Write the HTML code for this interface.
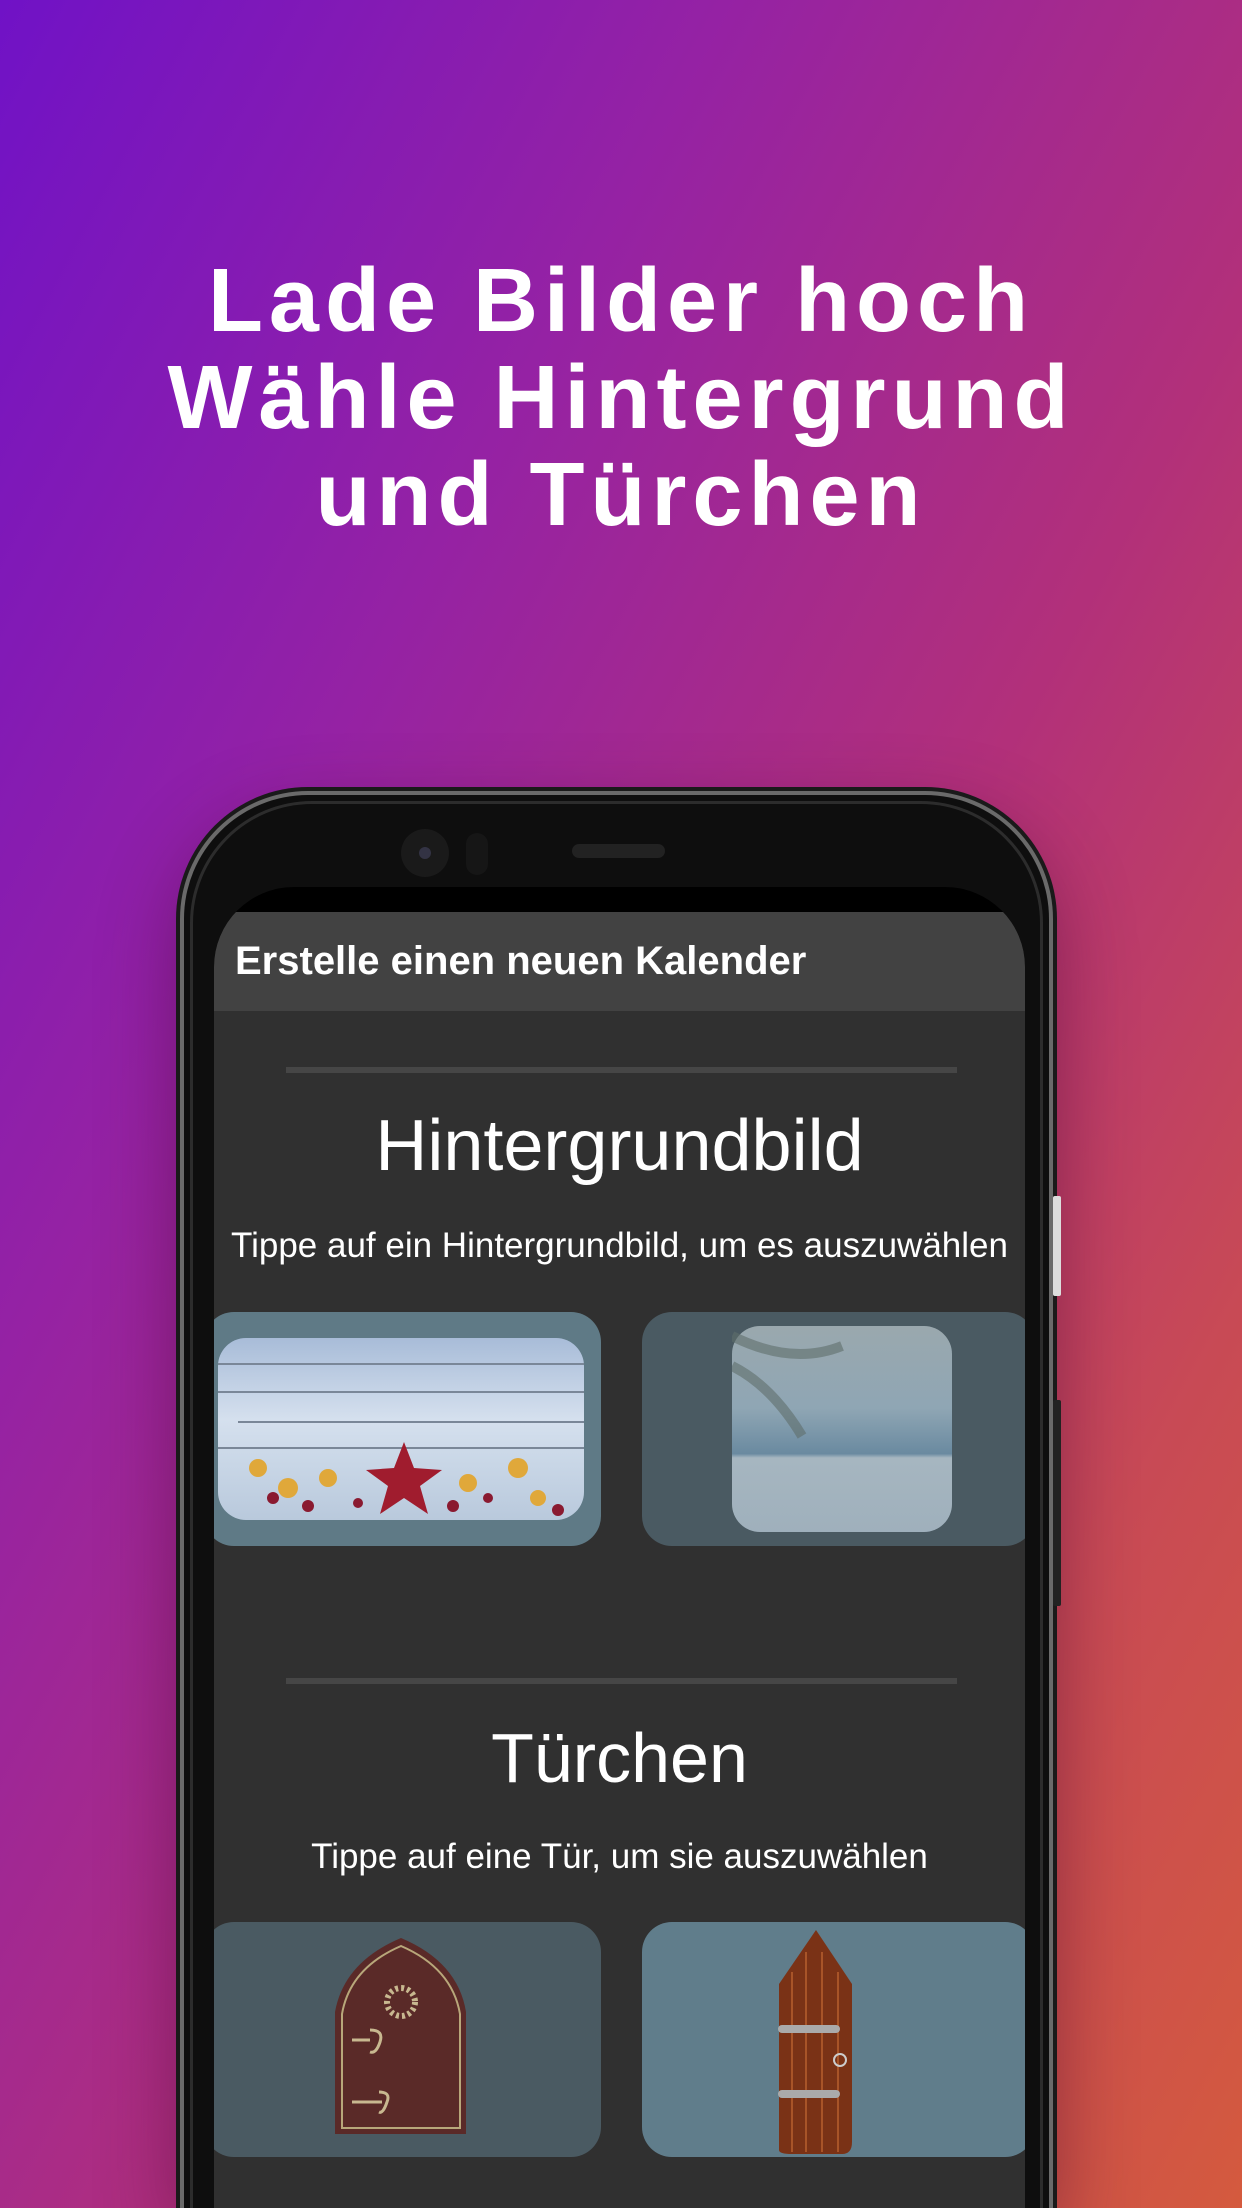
<!DOCTYPE html>
<html><head><meta charset="utf-8"><style>
*{margin:0;padding:0;box-sizing:border-box}
html{width:1242px;height:2208px;overflow:hidden;background:#b2307a}
body{width:1242px;height:2208px;overflow:hidden;position:relative;font-family:"Liberation Sans",sans-serif;
background:linear-gradient(118deg,#7012c6 0%,#9522a4 30%,#b2307a 58%,#c84a55 80%,#d45a3e 100%);}
.h{position:absolute;left:0;width:1242px;text-align:center;color:#fff;font-weight:bold;font-size:90px;line-height:97px;top:253px;letter-spacing:6px}
.phone{position:absolute;left:180px;top:791px;width:873px;height:1417px;border-radius:128px 128px 0 0;background:#0e0e0e;
border:4px solid #6a6a6a;border-bottom:none;box-shadow:0 0 0 4px #1a1a1a,0 30px 80px rgba(60,0,40,.45)}
.phone:before{content:"";position:absolute;left:6px;right:6px;top:6px;bottom:0;border-radius:122px 122px 0 0;border:3px solid #2c2c2c;border-bottom:none}
.btn{position:absolute;width:8px;border-radius:2px}
.screen{position:absolute;left:214px;top:887px;width:811px;height:1321px;border-radius:80px 80px 0 0;background:#000;overflow:hidden}
.bar{position:absolute;left:0;top:25px;width:811px;height:99px;background:#424242;color:#fff;font-size:40px;font-weight:bold;padding-left:21px;line-height:99px;box-shadow:0 4px 8px rgba(0,0,0,.4)}
.body{position:absolute;left:0;top:124px;width:811px;height:1197px;background:#303030}
.div{position:absolute;left:72px;width:671px;height:6px;background:#464646}
.t{position:absolute;left:0;width:811px;text-align:center;color:#fff;white-space:nowrap}
.card{position:absolute;border-radius:30px;overflow:hidden}
</style></head><body>
<div class="h">Lade Bilder hoch<br>Wähle Hintergrund<br>und Türchen</div>
<div class="phone"></div>
<div class="btn" style="left:1053px;top:1196px;height:100px;background:#ddd"></div>
<div class="btn" style="left:1053px;top:1400px;height:206px;background:#222"></div>
<div style="position:absolute;left:401px;top:829px;width:48px;height:48px;border-radius:50%;background:#1a1a1a"></div>
<div style="position:absolute;left:419px;top:847px;width:12px;height:12px;border-radius:50%;background:#334"></div>
<div style="position:absolute;left:466px;top:833px;width:22px;height:42px;border-radius:11px;background:#161616"></div>
<div style="position:absolute;left:572px;top:844px;width:93px;height:14px;border-radius:7px;background:#222"></div>
<div class="screen">
 <div class="bar">Erstelle einen neuen Kalender</div>
 <div class="body">
  <div class="div" style="top:56px"></div>
  <div class="t" style="top:94px;font-size:72px">Hintergrundbild</div>
  <div class="t" style="top:215px;font-size:35px">Tippe auf ein Hintergrundbild, um es auszuwählen</div>
  <div class="card" style="left:-10px;top:301px;width:397px;height:234px;background:#5f7a86">
   <div style="position:absolute;left:14px;top:26px;width:366px;height:182px;border-radius:28px;background:linear-gradient(180deg,#a8bcd8 0%,#d5e0ee 45%,#c8d6e6 70%,#b9c9dc 100%)">
    <svg width="366" height="182" style="position:absolute;left:0;top:0">
     <g stroke="#7a8798" stroke-width="2"><line x1="0" y1="26" x2="366" y2="26"/><line x1="0" y1="54" x2="366" y2="54"/><line x1="20" y1="84" x2="366" y2="84"/><line x1="0" y1="110" x2="366" y2="110"/></g>
     <polygon points="186,104 196,130 224,132 202,148 210,176 186,160 162,176 170,148 148,132 176,130" fill="#a01c2e"/>
     <g fill="#e0a83a"><circle cx="40" cy="130" r="9"/><circle cx="70" cy="150" r="10"/><circle cx="110" cy="140" r="9"/><circle cx="250" cy="145" r="9"/><circle cx="300" cy="130" r="10"/><circle cx="320" cy="160" r="8"/></g>
     <g fill="#8a1a30"><circle cx="55" cy="160" r="6"/><circle cx="90" cy="168" r="6"/><circle cx="140" cy="165" r="5"/><circle cx="235" cy="168" r="6"/><circle cx="270" cy="160" r="5"/><circle cx="340" cy="172" r="6"/></g>
    </svg>
   </div>
  </div>
  <div class="card" style="left:428px;top:301px;width:393px;height:234px;background:#4a5a62">
   <div style="position:absolute;left:90px;top:14px;width:220px;height:206px;border-radius:28px;background:linear-gradient(180deg,#9aa8ae 0%,#8fa6b4 40%,#6a8aa0 62%,#a6b6c0 64%,#9fb0bc 100%)">
    <svg width="220" height="206" style="position:absolute;left:0;top:0"><path d="M0 10 Q60 40 110 20 M0 40 Q40 60 70 110" stroke="#5f6e6a" stroke-width="10" fill="none" opacity=".6"/></svg>
   </div>
  </div>
  <div class="div" style="top:667px"></div>
  <div class="t" style="top:707px;font-size:70px">Türchen</div>
  <div class="t" style="top:826px;font-size:35px">Tippe auf eine Tür, um sie auszuwählen</div>
  <div class="card" style="left:-10px;top:911px;width:397px;height:235px;background:#4a5a62">
   <svg width="397" height="235" style="position:absolute;left:0;top:0">
    <path d="M131 212 L131 90 Q140 40 197 16 Q254 40 262 90 L262 212 Z" fill="#5a2a28"/>
    <path d="M138 206 L138 92 Q146 46 197 24 Q248 46 256 92 L256 206 Z" fill="none" stroke="#b8a77a" stroke-width="2"/>
    <circle cx="197" cy="80" r="14" fill="none" stroke="#c8b890" stroke-width="6" stroke-dasharray="3 3"/>
    <path d="M148 118 h18 M166 108 q14 0 10 12 q-4 12 -10 10 M148 180 h30 M175 170 q12 0 8 10 q-4 12 -8 10" stroke="#c8b890" stroke-width="3" fill="none"/>
   </svg>
  </div>
  <div class="card" style="left:428px;top:911px;width:393px;height:235px;background:#607d8b">
   <svg width="393" height="235" style="position:absolute;left:0;top:0">
    <path d="M137 228 Q137 232 150 232 L200 232 Q210 232 210 220 L210 62 L174 8 L137 62 Z" fill="#7a3216"/>
    <g stroke="#a85428" stroke-width="2"><line x1="150" y1="50" x2="150" y2="230"/><line x1="164" y1="30" x2="164" y2="230"/><line x1="180" y1="30" x2="180" y2="230"/><line x1="196" y1="50" x2="196" y2="230"/></g>
    <g stroke="#aaa" stroke-width="8" stroke-linecap="round"><line x1="140" y1="107" x2="194" y2="107"/><line x1="140" y1="172" x2="194" y2="172"/></g>
    <circle cx="198" cy="138" r="6" fill="none" stroke="#ccc" stroke-width="2"/>
   </svg>
  </div>
 </div>
</div>
</body></html>
